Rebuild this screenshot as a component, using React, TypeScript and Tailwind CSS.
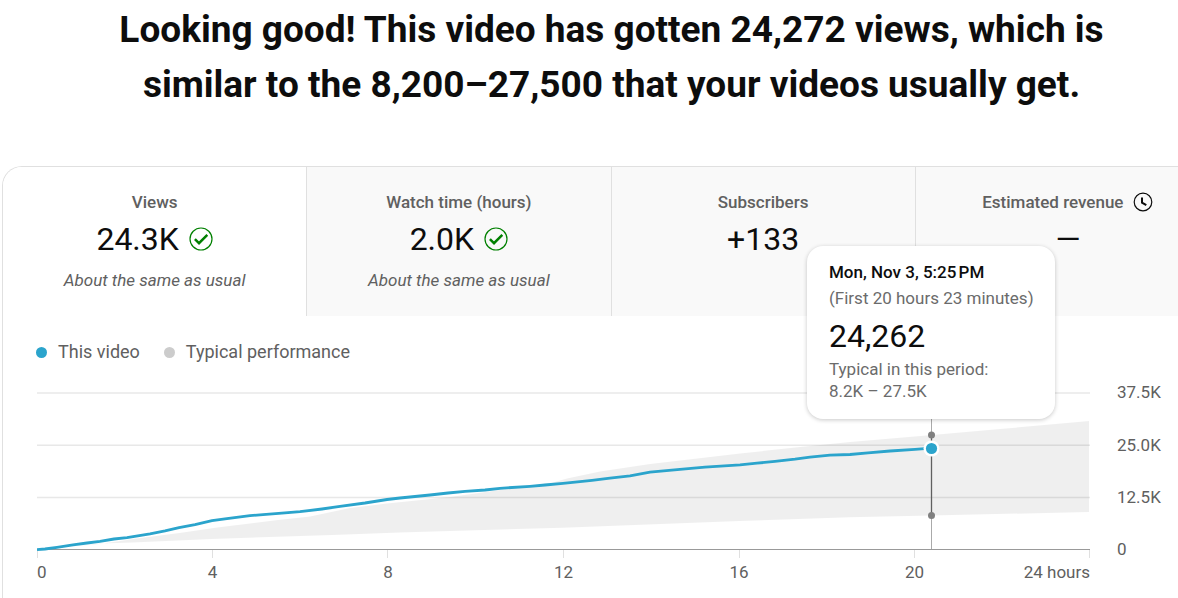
import { useState } from "react";

const CHART_WIDTH = 1053;
const CHART_HEIGHT = 166;
const MARKER_X = 894.5;

const METRICS = [
  { id: "views", label: "Views", value: "24.3K", note: "About the same as usual", onTrack: true },
  { id: "watch", label: "Watch time (hours)", value: "2.0K", note: "About the same as usual", onTrack: true },
  { id: "subs", label: "Subscribers", value: "+133" },
  { id: "revenue", label: "Estimated revenue", value: "—", pending: true },
];

const Y_LABELS = ["37.5K", "25.0K", "12.5K", "0"];
const X_LABELS = ["0", "4", "8", "12", "16", "20", "24 hours"];
const X_TICKS = [0.5, 175.5, 350.5, 526.5, 702.5, 877.5, 1052.5];

const VIEWS_LINE =
  "0,157.7 8,157 20,155.3 36,152.8 50,151 63,149.4 77,147 90,145.7 113,141.8 128,138.8 142,135.6 158,132.6 175,128.7 188,126.8 213,123.6 226,122.7 248,120.8 263,119.7 285,117 303,114.4 328,111 350,107.5 363,106 393,103 411,101 428,99.3 448,98 463,96.3 493,94.3 508,93 526,91.3 555,88.4 573,86.2 593,83.8 613,80.2 643,77.4 668,75.2 703,72.8 720,71.2 738,69.4 758,67.2 773,65.2 793,63.2 813,62.5 831,60.8 853,59 878,57.3 894,56.2";

const TYPICAL_RANGE =
  "0,157.5 63,152 96,147 146,140.5 180,135.5 241,128 273,124.5 313,116 350,111.5 413,105 463,98 516,90.5 530,86.5 563,79.5 613,72 703,61.5 763,55 813,50 895,43 963,37 1052,29 1052,120 895,123.5 813,125.3 703,129 526,135.7 363,140.5 296,143 175,147 96,150.5 63,151.5 0,157.5";

function CheckIcon() {
  return (
    <svg viewBox="0 0 24 24" className="h-6 w-6 shrink-0" fill="none" stroke="#008000" aria-hidden="true">
      <circle cx="12" cy="12" r="11" strokeWidth="1.2" />
      <path d="M5.9 12.2 10 16.2 18.3 7.8" strokeWidth="2.5" />
    </svg>
  );
}

function ClockIcon() {
  return (
    <svg viewBox="0 0 20 20" className="h-5 w-5 shrink-0" fill="none" stroke="#0d0d0d" aria-hidden="true">
      <circle cx="10" cy="10" r="8.8" strokeWidth="1.2" />
      <path d="M9 5.5V10.7L13.3 13.2" strokeWidth="2" />
    </svg>
  );
}

function Tooltip() {
  return (
    <div className="absolute right-[35px] bottom-[163px] h-[173px] w-[248px] rounded-2xl bg-white px-[22px] pt-4 text-[17px] text-[#6b6b6b] shadow-[0_1px_4px_rgba(0,0,0,0.22)]">
      <p className="leading-5 font-medium text-[#0d0d0d]">Mon, Nov 3, 5:25{"\u202f"}PM</p>
      <p className="mt-1.5 leading-5 whitespace-nowrap">(First 20 hours 23 minutes)</p>
      <p className="mt-2 text-[32px] leading-10 text-[#0d0d0d]">24,262</p>
      <p className="mt-0.5 leading-[22px]">
        Typical in this period:
        <br />
        8.2K – 27.5K
      </p>
    </div>
  );
}

function PerformanceChart() {
  return (
    <div className="mt-[28px] flex pl-[34px] text-[17px] text-[#606060]">
      <div className="relative min-w-0 flex-1">
        <svg viewBox={`0 0 ${CHART_WIDTH} ${CHART_HEIGHT}`} className="block h-auto w-full" role="img" aria-label="Views over the first 24 hours">
          {[1, 53.2, 105.4].map((y) => (
            <line key={y} x1="0" x2={CHART_WIDTH} y1={y} y2={y} stroke="#e8e8e8" strokeWidth="1.5" />
          ))}
          {X_TICKS.map((x) => (
            <line key={x} x1={x} x2={x} y1="158" y2="166" stroke="#e0e0e0" />
          ))}
          <polygon points={TYPICAL_RANGE} fill="#000" fillOpacity="0.063" />
          <line x1="0" x2={CHART_WIDTH} y1="157.5" y2="157.5" stroke="#999" />
          <polyline points={VIEWS_LINE} fill="none" stroke="#2ba4cc" strokeWidth="2.8" strokeLinejoin="round" />
          <line x1={MARKER_X} x2={MARKER_X} y1="20" y2="157" stroke="#aaa" />
          <line x1={MARKER_X} x2={MARKER_X} y1="43" y2="123.5" stroke="#606060" strokeWidth="1.3" />
          <circle cx={MARKER_X} cy="43" r="3.5" fill="#808080" />
          <circle cx={MARKER_X} cy="123.5" r="3.5" fill="#808080" />
          <circle cx={MARKER_X} cy="56.5" r="8" fill="#fff" />
          <circle cx={MARKER_X} cy="56.5" r="5.6" fill="#2ba4cc" />
        </svg>
        <div className="mt-1 flex justify-between leading-5">
          {X_LABELS.map((label) => (
            <span key={label} className="flex w-0 justify-center whitespace-nowrap first:justify-start last:justify-end">
              {label}
            </span>
          ))}
        </div>
        <Tooltip />
      </div>
      <div className="mt-px flex h-[157px] w-[130px] flex-col justify-between pl-[27px]">
        {Y_LABELS.map((label) => (
          <span key={label} className="flex h-0 items-center">
            {label}
          </span>
        ))}
      </div>
    </div>
  );
}

export default function App() {
  const [selected, setSelected] = useState("views");

  return (
    <div className="min-h-screen overflow-hidden bg-white font-[Roboto,sans-serif]">
      <main className="-mr-[43px] ml-0.5 pt-0.5">
        <h1 className="mx-auto max-w-[1040px] text-center text-[37px] leading-[55px] font-bold text-[#0d0d0d]">
          Looking good! This video has gotten 24,272 views, which is similar to the 8,200–27,500 that your videos
          usually get.
        </h1>

        <section className="mt-[54px] overflow-hidden rounded-t-[20px] border border-b-0 border-[#e0e0e0] pb-4">
          <div role="tablist" className="grid grid-cols-4">
            {METRICS.map((metric) => (
              <button
                key={metric.id}
                type="button"
                role="tab"
                aria-selected={selected === metric.id}
                onClick={() => setSelected(metric.id)}
                className={`flex h-[149px] flex-col items-center border-r border-[#e0e0e0] pt-[25px] last:border-r-0 ${
                  selected === metric.id ? "bg-white" : "bg-[#f9f9f9]"
                }`}
              >
                <span className="flex items-center gap-2.5 text-[17px] leading-5 font-medium text-[#606060]">
                  {metric.label}
                  {metric.pending && <ClockIcon />}
                </span>
                <span className="mt-[7px] flex items-center gap-2.5 text-[32px] leading-10 text-[#0d0d0d]">
                  {metric.value}
                  {metric.onTrack && <CheckIcon />}
                </span>
                {metric.note && <span className="mt-[11px] text-[17px] leading-5 text-[#606060] italic">{metric.note}</span>}
              </button>
            ))}
          </div>

          <div className="mt-6 flex items-center gap-6 pl-[33px] text-lg leading-6 text-[#606060]">
            <span className="flex items-center gap-[11px]">
              <span className="h-[11px] w-[11px] rounded-full bg-[#2ba4cc]" />
              This video
            </span>
            <span className="flex items-center gap-[11px]">
              <span className="h-[11px] w-[11px] rounded-full bg-[#ccc]" />
              Typical performance
            </span>
          </div>

          <PerformanceChart />
        </section>
      </main>
    </div>
  );
}
